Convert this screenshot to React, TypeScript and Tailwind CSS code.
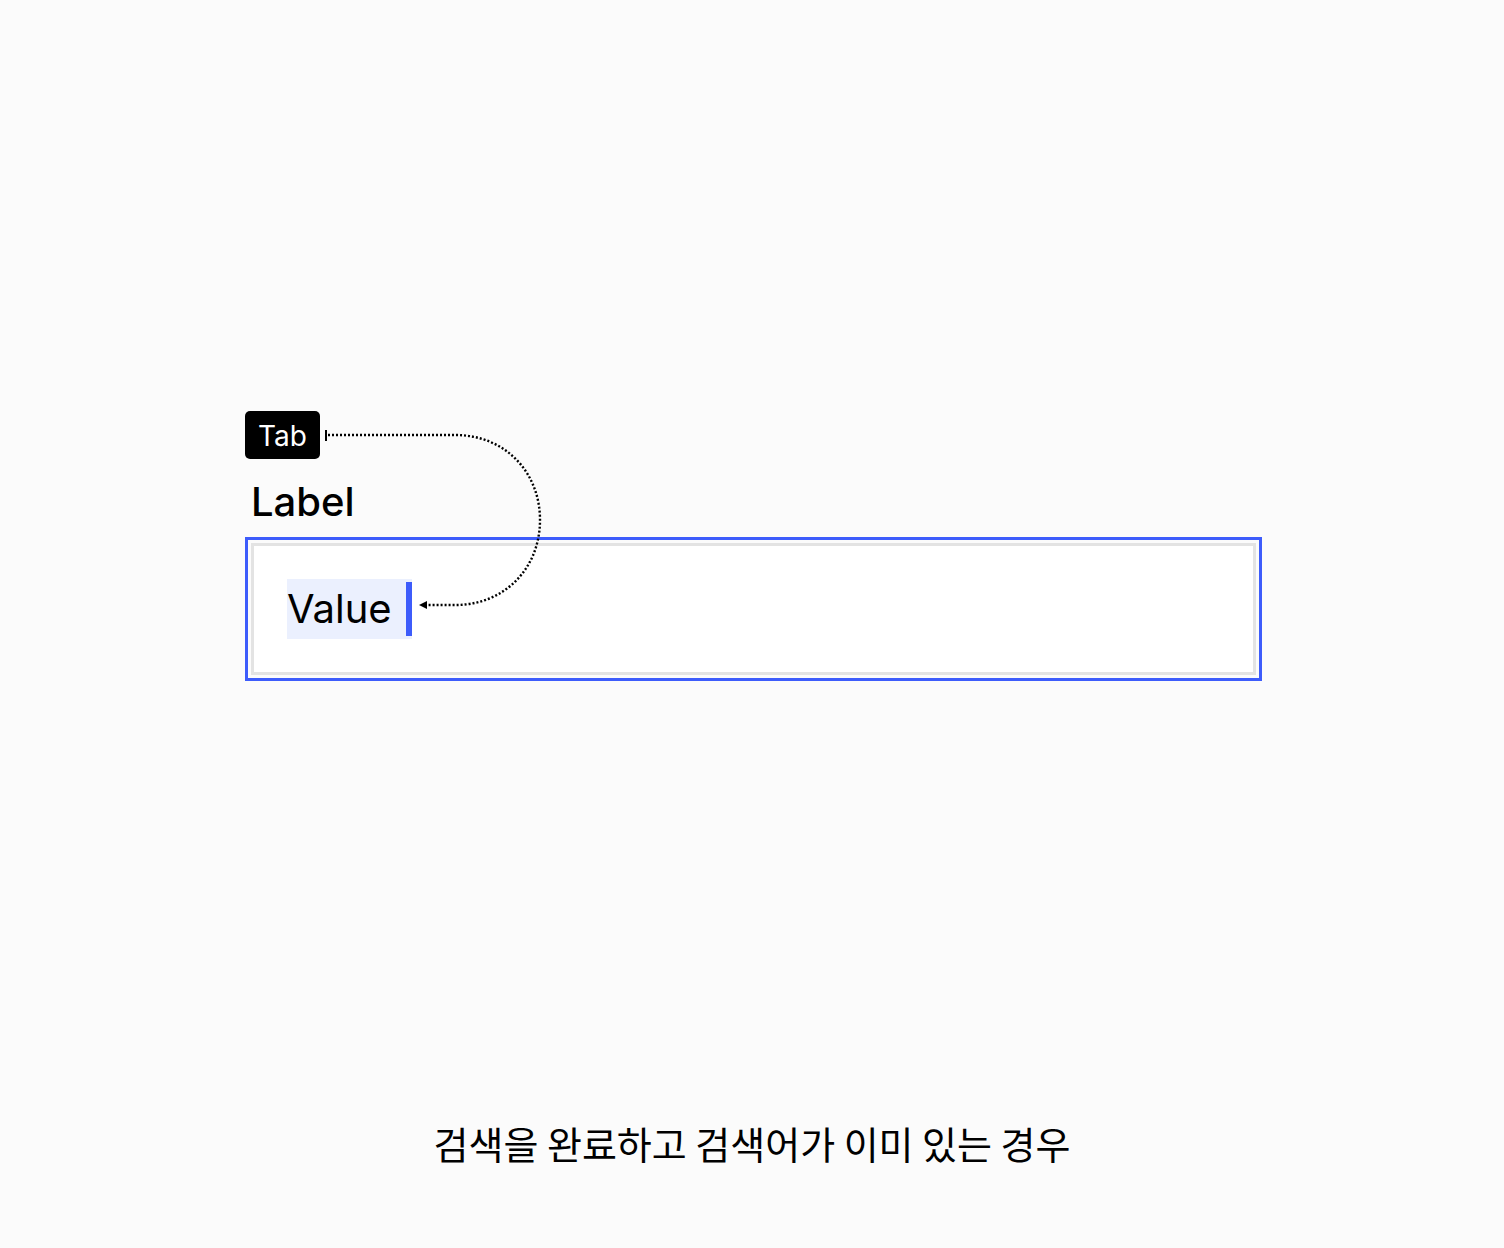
import React from 'react';

const FocusArrow: React.FC = () => (
  <svg
    className="pointer-events-none absolute left-0 top-0"
    width="1504"
    height="1248"
    viewBox="0 0 1504 1248"
    fill="none"
  >
    <line x1="326" y1="430" x2="326" y2="441" stroke="#000" strokeWidth="2" />
    <path
      d="M328 435 H455 C505 435 540 472 540 520 C540 568 505 605 455 605 H427"
      stroke="#000"
      strokeWidth="2.4"
      strokeDasharray="2 2"
    />
    <polygon points="419,605 427,601 427,609" fill="#000" />
  </svg>
);

const App: React.FC = () => {
  return (
    <div className="relative w-full min-h-[1248px] bg-[#fbfbfb] font-['Inter','Noto_Sans_CJK_KR',sans-serif] text-black">
      <div className="flex flex-col items-start pt-[411px] pl-[245px]">
        <div className="flex h-[48px] w-[75px] items-center justify-center rounded-[5px] bg-black pt-[2px] text-[28px] leading-none text-white">
          Tab
        </div>
        <div className="mt-[19px] pl-[6px] text-[40px] font-medium leading-[48px]">Label</div>
        <div className="mt-[11px] w-[1017px] border-[3px] border-[#3d5cfb] bg-[#fbfbfb] p-[3px]">
          <div className="flex h-[132px] items-center border-[3px] border-[#e3e3e3] bg-white pl-[33px]">
            <span className="flex h-[60px] items-center bg-[#ebf0fe]">
              <span className="text-[40px] leading-[60px]">Value</span>
              <span className="ml-[14px] h-[54px] w-[6px] bg-[#3d5cfb]" />
            </span>
          </div>
        </div>
      </div>
      <p className="mt-[440px] text-center font-['Noto_Sans_CJK_KR',sans-serif] text-[38px] leading-[43px]">
        검색을 완료하고 검색어가 이미 있는 경우
      </p>
      <FocusArrow />
    </div>
  );
};

export default App;
